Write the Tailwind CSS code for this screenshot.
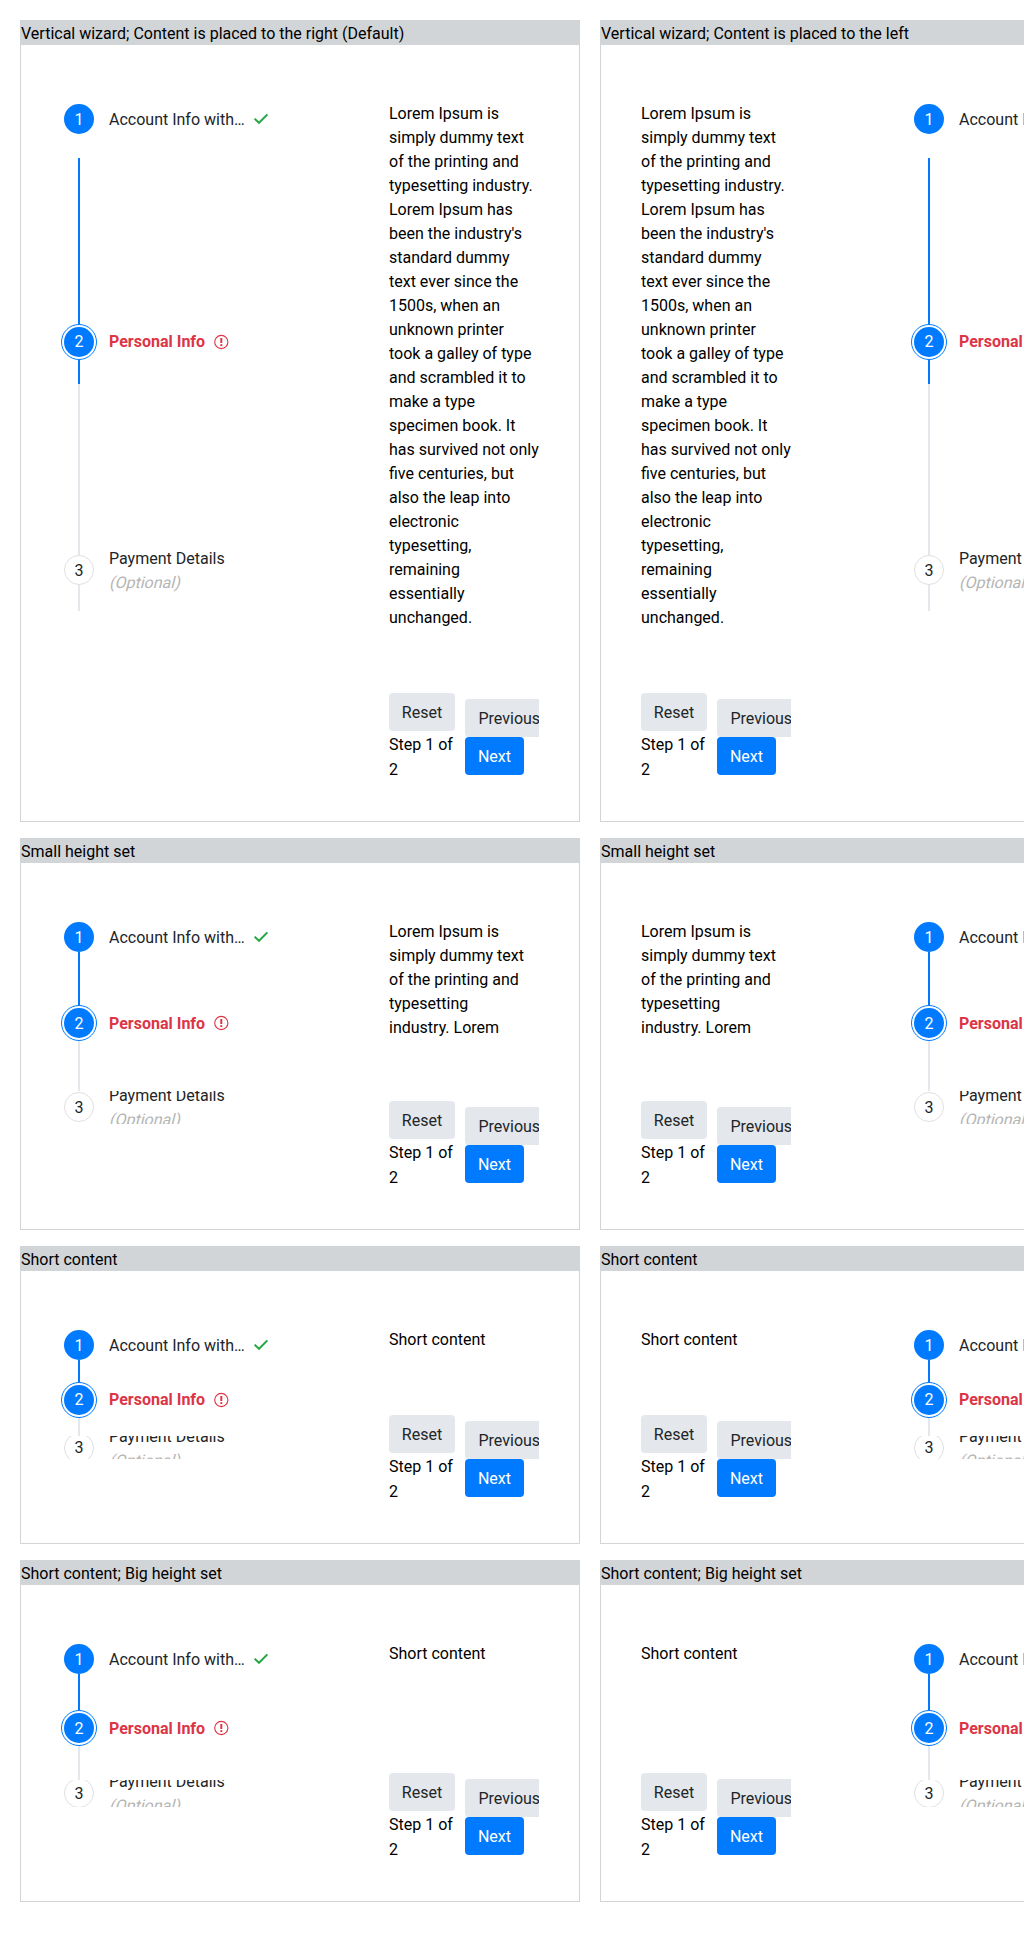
<!DOCTYPE html>
<html lang="en">
<head>
<meta charset="utf-8">
<title>Vertical wizard</title>
<script src="https://cdn.jsdelivr.net/npm/@tailwindcss/browser@4"></script>
</head>
<body class="bg-white font-['Roboto',sans-serif] text-base leading-6 text-black">
<main id="page" class="grid h-[1938px] w-[1024px] grid-cols-[560px_560px] content-start gap-x-5 gap-y-4 overflow-hidden p-5"></main>
<script>
const check = '<svg class="ml-2 size-4 shrink-0" viewBox="0 0 16 16" fill="none" stroke="#28a745" stroke-width="2"><path d="M1.6 7.6 6 11.8 14.4 3.4"/></svg>';
const alertIcon = '<svg class="ml-2 size-4 shrink-0" viewBox="0 0 16 16" fill="none" stroke="#dc3545"><circle cx="8.3" cy="8" r="6.6" stroke-width="1.1"/><path d="M8.3 4v5" stroke-width="2"/><path d="M8.3 10.2v1.8" stroke-width="2"/></svg>';
const long = "Lorem Ipsum is<br>simply dummy text<br>of the printing and<br>typesetting industry.<br>Lorem Ipsum has<br>been the industry's<br>standard dummy<br>text ever since the<br>1500s, when an<br>unknown printer<br>took a galley of type<br>and scrambled it to<br>make a type<br>specimen book. It<br>has survived not only<br>five centuries, but<br>also the leap into<br>electronic<br>typesetting,<br>remaining<br>essentially<br>unchanged.";
const small = "Lorem Ipsum is<br>simply dummy text<br>of the printing and<br>typesetting<br>industry. Lorem";

// Lengths in px: height = panel; gap/a/b/c/tail = connector segments; clip = visible height of step 3,
// shift = offset of step 3's row inside its clip; nudge2/nudge3 = extra top padding of the texts of steps 2 and 3.
const rows = [
  {titles: ["Vertical wizard; Content is placed to the right (Default)", "Vertical wizard; Content is placed to the left"], text: long, height: 802, gap: 24, a: 166, b: 24, c: 171, clip: 30, shift: 0, tail: 26, nudge2: 0, nudge3: 2},
  {titles: ["Small height set", "Small height set"], text: small, height: 392, gap: 0, a: 53, b: 0, c: 50, clip: 33, shift: 1, tail: 0, nudge2: 2, nudge3: 2},
  {titles: ["Short content", "Short content"], text: "Short content", height: 298, gap: 0, a: 22, b: 0, c: 18, clip: 23, shift: -3, tail: 0, nudge2: 0, nudge3: 0},
  {titles: ["Short content; Big height set", "Short content; Big height set"], text: "Short content", height: 342, gap: 0, a: 36, b: 0, c: 34, clip: 27, shift: -2, tail: 0, nudge2: 2, nudge3: 2},
];
const line = (h, color) => `<div class="ml-[17px] w-0.5 shrink-0 ${color}" style="height:${h}px"></div>`;
const steps = r => `
  <div class="flex w-[190px] shrink-0 flex-col pt-[59px]">
    <div class="flex h-[30px] shrink-0 items-center pl-[3px]">
      <div class="flex size-[30px] shrink-0 items-center justify-center rounded-full bg-[#007bff] pt-0.5 text-white">1</div>
      <span class="ml-[15px] whitespace-nowrap pt-0.5 text-[#212529]">Account Info with…</span>${check}
    </div>
    <div class="shrink-0" style="height:${r.gap}px"></div>
    ${line(r.a, "bg-[#007bff]")}
    <div class="flex h-9 shrink-0 items-center">
      <div class="flex size-9 shrink-0 items-center justify-center rounded-full border border-[#007bff] bg-white"><div class="flex size-[30px] items-center justify-center rounded-full bg-[#007bff] text-white" style="padding-top:${r.nudge2}px">2</div></div>
      <span class="ml-3 whitespace-nowrap font-bold text-[#dc3545]" style="padding-top:${r.nudge2}px">Personal Info</span>${alertIcon}
    </div>
    ${r.b ? line(r.b, "bg-[#007bff]") : ""}
    ${line(r.c, "bg-[#e4e7eb]")}
    <div class="shrink-0 ${r.tail ? "" : "overflow-y-clip"}" style="height:${r.clip}px">
      <div class="flex h-[30px] items-center pl-[3px]" style="margin-top:${r.shift}px">
        <div class="flex size-[30px] shrink-0 items-center justify-center rounded-full border border-[#e0e0e0] bg-white text-[#212529]" style="padding-top:${r.nudge3}px">3</div>
        <div class="ml-[15px] whitespace-nowrap pt-0.5 text-[#212529]">
          <div>Payment Details</div>
          <div class="w-fit origin-[0_17px] -skew-x-14 text-[#b5b5b5]">(Optional)</div>
        </div>
      </div>
    </div>
    ${r.tail ? line(r.tail, "bg-[#e4e7eb]") : ""}
  </div>`;
const content = r => `
  <div class="flex w-[150px] shrink-0 flex-col justify-between overflow-hidden pt-[57px] pb-[46px]">
    <p class="whitespace-nowrap">${r.text}</p>
    <div class="flex h-[82px] shrink-0 gap-2.5">
      <div class="w-[66px] shrink-0">
        <button class="block h-[38px] w-[66px] rounded bg-[#e4e7eb] pt-0.5 text-[#212529]">Reset</button>
        <p class="pt-px leading-[25px]">Step 1 of<br>2</p>
      </div>
      <div class="shrink-0 pt-1.5">
        <button class="block h-[38px] rounded bg-[#e4e7eb] px-[13.5px] pt-0.5 text-[#212529]">Previous</button>
        <button class="block h-[38px] w-[59px] rounded bg-[#007bff] pt-0.5 text-white">Next</button>
      </div>
    </div>
  </div>`;
document.getElementById("page").innerHTML = rows.map(r => r.titles.map((t, i) => `
  <section class="flex flex-col border border-[#d1d5d8]" style="height:${r.height}px">
    <h2 class="h-6 shrink-0 bg-[#d1d5d8] leading-[26px]">${t}</h2>
    <div class="flex grow pl-10 ${i ? "gap-[120px]" : "gap-[138px]"}">${i ? content(r) + steps(r) : steps(r) + content(r)}</div>
  </section>`).join("")).join("");
</script>
</body>
</html>
